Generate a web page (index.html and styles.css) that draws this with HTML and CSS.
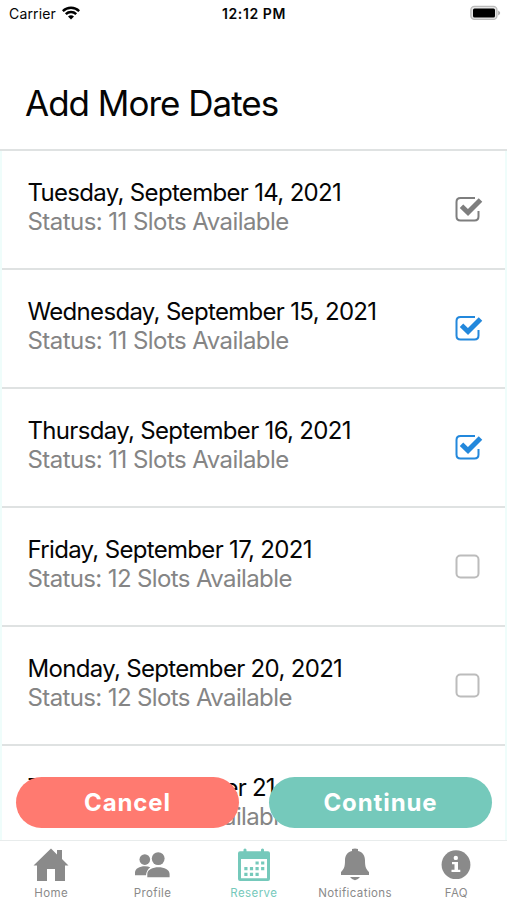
FILE: index.html
```html
<!DOCTYPE html>
<html lang="en">
<head>
<meta charset="utf-8">
<title>Add More Dates</title>
<link rel="stylesheet" href="styles.css">
</head>
<body>
<svg class="defs" width="0" height="0">
  <symbol id="checked" viewBox="0 0 28 26">
    <path d="M20 2H5.500Q1.500 2 1.500 6v14.500q0 4 4 4h14q4 0 4-4V15" fill="none" stroke="currentColor" stroke-width="2"/>
    <path d="M6.500 10.300l6.500 6.200L25.500 4" fill="none" stroke="currentColor" stroke-width="5"/>
  </symbol>
  <symbol id="unchecked" viewBox="0 0 28 26">
    <rect x="1.500" y="1.500" width="22" height="22" rx="4" fill="none" stroke="currentColor" stroke-width="2"/>
  </symbol>
</svg>
<div class="app">
  <header class="status">
    <div class="carrier"><span class="carrier-name">Carrier</span>
      <svg width="18" height="14" viewBox="0 0 18 14" fill="none" stroke="#000" stroke-width="2.500"><path d="M.8 5.100a11.800 11.800 0 0 1 16.400 0M3.800 8.200a7.500 7.500 0 0 1 10.400 0"/><path d="M9 13.500L6 10.600a4.300 4.300 0 0 1 6 0z" fill="#000" stroke="none"/></svg>
    </div>
    <div class="clock">12:12 PM</div>
    <svg class="battery" width="31" height="16" viewBox="0 0 31 16"><rect x=".9" y="1.400" width="26" height="13" rx="3.500" fill="#e6e6e6" stroke="#bbb" stroke-width="1.400"/><rect x="3" y="3.400" width="22" height="9" rx="1.500"/><path d="M28.200 5.400q4 2.500 0 5z" fill="#aaa"/></svg>
  </header>
  <h1 class="title">Add More Dates</h1>
  <main class="list">
    <section class="row"><div class="info"><p class="date">Tuesday, September 14, 2021</p><p class="slots">Status: 11 Slots Available</p></div><svg class="check locked"><use href="#checked"/></svg></section>
    <section class="row"><div class="info"><p class="date">Wednesday, September 15, 2021</p><p class="slots">Status: 11 Slots Available</p></div><svg class="check on"><use href="#checked"/></svg></section>
    <section class="row"><div class="info"><p class="date">Thursday, September 16, 2021</p><p class="slots">Status: 11 Slots Available</p></div><svg class="check on"><use href="#checked"/></svg></section>
    <section class="row"><div class="info"><p class="date">Friday, September 17, 2021</p><p class="slots twelve">Status: 12 Slots Available</p></div><svg class="check off"><use href="#unchecked"/></svg></section>
    <section class="row"><div class="info"><p class="date">Monday, September 20, 2021</p><p class="slots twelve">Status: 12 Slots Available</p></div><svg class="check off"><use href="#unchecked"/></svg></section>
    <section class="row"><div class="info"><p class="date last">Tuesday, September 21, 2021</p><p class="slots twelve">Status: 12 Slots Available</p></div></section>
    <div class="actions"><button class="btn cancel">Cancel</button><button class="btn continue">Continue</button></div>
  </main>
  <nav class="tabs">
    <a class="tab"><svg viewBox="0 0 36 34"><path d="M18 .5L.5 17.500H4V33h10V21h8v12h10V17.500h3.500L29 11V2h-5v4.500z"/></svg><span>Home</span></a>
    <a class="tab"><svg viewBox="0 0 36 34"><circle cx="9.800" cy="11.600" r="5.300"/><circle cx="23.200" cy="10.600" r="6.400"/><path d="M0 27.200v-2.700c0-4 4.500-6.300 10-6.300q3 0 5.300 1Q11.500 22 11 27.200zM12.300 29.200V26c0-4.500 5.500-6.800 11.200-6.800S34.600 21.500 34.600 26v3.200z"/></svg><span>Profile</span></a>
    <a class="tab active"><svg viewBox="0 0 36 34"><path fill-rule="evenodd" d="M4 3.200h3.500V1.500q1.500-1.800 3 0v1.700h14.500V1.500q1.500-1.800 3 0v1.700H32q2 0 2 2V31q0 2-2 2H4q-2 0-2-2V5.200q0-2 2-2zM5 11v19.200h26V11z"/><path d="M19.500 13.400h3.200v3.200h-3.200zm5.600 0h3.200v3.200h-3.200zM8.300 19h3.200v3.200H8.300zm5.600 0h3.200v3.200h-3.200zm5.600 0h3.200v3.200h-3.200zm5.600 0h3.200v3.200h-3.200zM8.300 24.700h3.200v3.200H8.300zm5.600 0h3.200v3.200h-3.200zm5.600 0h3.200v3.200h-3.200z"/></svg><span>Reserve</span></a>
    <a class="tab"><svg viewBox="0 0 36 34"><path d="M15 3V1q3-.8 6 0v2c5 1 7 5 7 9.500 0 6.500 1 8.500 4 11.500v3H4v-3c3-3 4-5 4-11.500C8 8 10 4 15 3zM13 29h10q-5 6.500-10 0z"/></svg><span>Notifications</span></a>
    <a class="tab"><svg viewBox="0 0 36 34"><circle cx="18" cy="16.700" r="14.400"/><circle cx="17.800" cy="9.900" r="2.200" fill="#fff"/><path d="M14 14h6v7.700h2.300V24h-8.800v-2.300h3v-5.400H14z" fill="#fff"/></svg><span>FAQ</span></a>
  </nav>
</div>
</body>
</html>
```
FILE: styles.css
```css
* { box-sizing: border-box; }
body { margin: 0; background: #fff; font-family: Inter, sans-serif; color: #050505; }
.defs { display: block; }
.app { width: 507px; height: 900px; display: flex; flex-direction: column; overflow: hidden; }
.status { height: 28px; flex: none; display: grid; grid-template-columns: 1fr 1fr 1fr; padding: 0 6px 0 9px; }
.carrier { display: flex; align-items: center; height: 27px; gap: 6px; font-size: 14px; letter-spacing: .15px; }
.carrier svg { margin-top: -2px; }
.clock { text-align: center; font-size: 14px; font-weight: 600; line-height: 27px; letter-spacing: .6px; margin-left: -2px; }
.battery { justify-self: end; margin-top: 5px; }
.title { height: 123px; flex: none; margin: 0; padding: 53px 0 0 25px; border-bottom: 2px solid #dfe2e2; font-size: 35px; line-height: 44px; font-weight: 400; letter-spacing: -1px; white-space: nowrap; }
.list { position: relative; flex: 1; min-height: 0; overflow: hidden; border: solid #effdfb; border-width: 0 2px; }
.row { height: 119px; display: flex; justify-content: space-between; border-bottom: 2px solid #dfe2e2; padding: 27px 22px 0 25.500px; }
.date, .slots { margin: 0; font-size: 24px; line-height: 30px; letter-spacing: -.68px; white-space: nowrap; }
.date.last { letter-spacing: -.8px; }
.slots { color: #858585; margin-top: -.6px; letter-spacing: -.55px; }
.twelve { letter-spacing: -.62px; }
.check { width: 28px; height: 26px; margin-top: 18px; flex: none; }
.off { margin-top: 19px; color: #bcbcbc; }
.locked { color: #7e7e7e; }
.on { color: #2388dc; }
.actions { position: absolute; left: 14px; top: 626px; display: flex; gap: 30px; }
.btn { width: 223px; height: 51px; border: 0; border-radius: 26px; padding: 0; color: #fff; font: 700 24px Inter, sans-serif; letter-spacing: .9px; }
.cancel { background: #ff7a70; }
.continue { background: #75c9bb; }
.tabs { height: 60px; flex: none; display: grid; grid-template-columns: repeat(5, 101.300px); padding-left: .6px; border-top: 1px solid #e8ecec; }
.tab { display: flex; flex-direction: column; align-items: center; padding-top: 7px; color: #8a8a8a; font-size: 11.500px; line-height: 16px; letter-spacing: .4px; }
.tab svg { width: 36px; height: 34px; fill: currentColor; margin-bottom: 3px; }
.active { color: #75c9bb; }
```
